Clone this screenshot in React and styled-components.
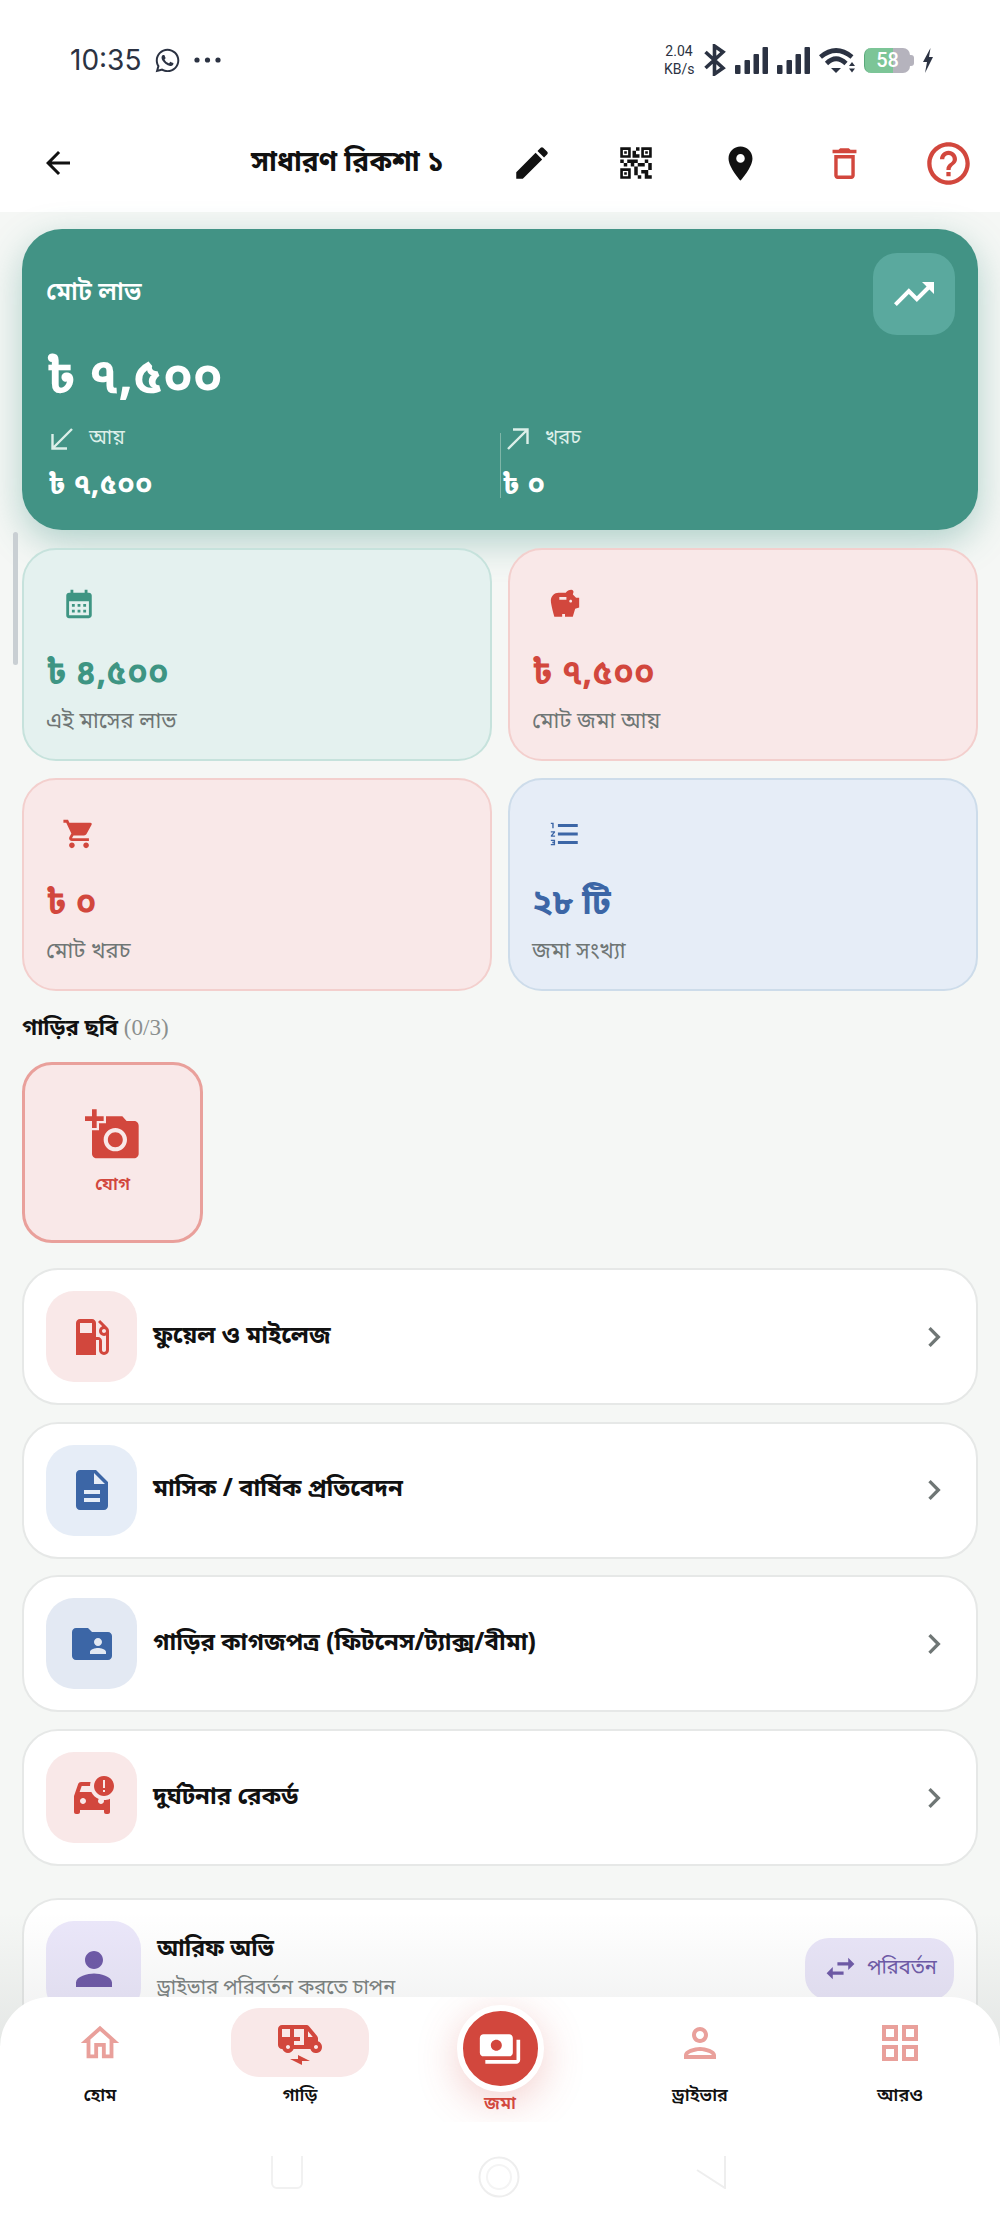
import React from "react";
import styled, { createGlobalStyle } from "styled-components";
import {
  MdArrowBack, MdEdit, MdQrCode2, MdPlace, MdDeleteOutline, MdHelpOutline, MdTrendingUp,
  MdCalendarMonth, MdSavings, MdShoppingCart, MdFormatListNumbered,
  MdAddAPhoto, MdLocalGasStation, MdDescription, MdFolderShared, MdCarCrash, MdChevronRight,
  MdPerson, MdSwapHoriz, MdOutlineHome, MdOutlinePerson, MdOutlineGridView, MdElectricRickshaw,
  MdPayments,
} from "react-icons/md";
import { FaWhatsapp } from "react-icons/fa";

const FONT = `"Noto Sans Bengali", "Noto Serif Bengali", "Lohit Bengali", "Liberation Sans", "Noto Sans", sans-serif`;

const Global = createGlobalStyle`
  html, body { margin: 0; padding: 0; background: #fff; }
  body { font-family: ${FONT}; color: #111; }
  * { box-sizing: border-box; }
  svg { display: block; }
`;

const Screen = styled.div`
  position: relative;
  width: 1000px;
  height: 2225px;
  overflow: hidden;
  background: #f5f7f5;
`;

const StatusBar = styled.div`
  height: 108px;
  background: #fff;
  display: flex;
  align-items: center;
  justify-content: space-between;
  padding: 12px 67px 0 70px;
  color: #2b3242;
`;

const Group = styled.div`
  display: flex;
  align-items: center;
  gap: ${(p) => p.$gap || 8}px;
`;

const Time = styled.span`
  font: 400 28px "Inter", sans-serif;
`;

const Speed = styled.span`
  font: 400 14px/18px "Roboto", sans-serif;
  text-align: center;
  width: 30px;
`;

const Battery = styled.span`
  position: relative;
  width: 46px;
  height: 25px;
  margin-right: 4px;
  border-radius: 7px;
  background: linear-gradient(90deg, #7cc597 62%, #b5b3bd 62%);
  border-left: 1px solid #5aa97b;
  color: #fff;
  font: 500 20px/25px "Roboto", sans-serif;
  text-align: center;
  &::after {
    content: "";
    position: absolute;
    right: -4px;
    top: 7px;
    width: 4px;
    height: 11px;
    border-radius: 0 3px 3px 0;
    background: #b5b3bd;
  }
`;

const Header = styled.header`
  height: 104px;
  background: #fff;
  display: flex;
  align-items: center;
  padding: 6px 0 0 40px;
`;

const Title = styled.h1`
  margin: 0;
  flex: 1;
  font-size: 28px;
  font-weight: 700;
  padding-left: 175px;
  white-space: nowrap;
`;

const HeaderIcons = styled.div`
  display: grid;
  grid-template-columns: repeat(5, 104px);
  justify-items: center;
  align-items: center;
`;

const Content = styled.main`
  padding: 17px 22px 0;
  display: flex;
  flex-direction: column;
`;

const ScrollThumb = styled.div`
  position: absolute;
  left: 13px;
  top: 532px;
  width: 5px;
  height: 133px;
  border-radius: 3px;
  background: #c9cfd3;
`;

const Hero = styled.section`
  height: 301px;
  border-radius: 40px;
  background: #429385;
  box-shadow: 0 12px 36px rgba(66, 147, 133, 0.38);
  color: #fff;
  padding: 24px 23px 0 24px;
  display: flex;
  flex-direction: column;
`;

const HeroTop = styled.div`
  display: flex;
  justify-content: space-between;
`;

const HeroLabel = styled.div`
  font-size: 25px;
  font-weight: 600;
  line-height: 36px;
  padding-top: 23px;
`;

const HeroBadge = styled.div`
  width: 82px;
  height: 82px;
  border-radius: 24px;
  background: #5aa99e;
  display: flex;
  align-items: center;
  justify-content: center;
`;

const HeroAmount = styled.div`
  font-size: 49px;
  font-weight: 700;
  line-height: 60px;
  margin-top: 16px;
`;

const HeroSplit = styled.div`
  display: grid;
  grid-template-columns: 454px 1fr;
  margin-top: 13px;
`;

const HeroCol = styled.div`
  padding-left: 2px;
  ${(p) => p.$divider && "background: linear-gradient(#7fb6a8, #7fb6a8) left 9px / 1px 65px no-repeat;"}
`;

const HeroColHead = styled.div`
  display: flex;
  align-items: center;
  gap: 16px;
  padding-left: ${(p) => p.$indent}px;
  font-size: 20px;
  line-height: 30px;
  color: #dcefe9;
`;

const HeroColValue = styled.div`
  font-size: 29px;
  font-weight: 700;
  line-height: 40px;
  margin-top: 13px;
`;

const StatGrid = styled.div`
  display: grid;
  grid-template-columns: 1fr 1fr;
  gap: 17px 16px;
  margin-top: 18px;
`;

const StatCard = styled.div`
  height: 213px;
  border-radius: 34px;
  border: 2px solid ${(p) => p.$line};
  background: ${(p) => p.$bg};
  padding: 37px 22px 0;
`;

const StatIcon = styled.div`
  height: 34px;
  padding-left: 16px;
  color: ${(p) => p.$color};
`;

const StatValue = styled.div`
  font-size: 34px;
  font-weight: 700;
  line-height: 44px;
  margin-top: 33px;
  color: ${(p) => p.$color};
`;

const StatLabel = styled.div`
  font-size: 22px;
  line-height: 30px;
  margin-top: 10px;
  color: #6f7675;
`;

const SectionHead = styled.div`
  font-size: 22px;
  font-weight: 700;
  line-height: 30px;
  margin-top: 24px;
`;

const Muted = styled.span`
  font: 400 23px "Liberation Serif", serif;
  color: #8a8f8e;
`;

const AddPhoto = styled.div`
  width: 181px;
  height: 181px;
  margin-top: 17px;
  border-radius: 30px;
  border: 3px solid #e9a09b;
  background: #f9e8e8;
  color: #d2473d;
  display: flex;
  flex-direction: column;
  align-items: center;
  padding-top: 42px;
  font-size: 18px;
  font-weight: 600;
  gap: 10px;
`;

const MenuList = styled.div`
  display: flex;
  flex-direction: column;
  gap: 16.7px;
  margin-top: 25px;
`;

const Row = styled.div`
  height: 137px;
  border-radius: 36px;
  border: 2px solid #e6e8e7;
  background: #fff;
  padding: 0 22px;
  display: flex;
  align-items: center;
  gap: 16px;
`;

const RowIcon = styled.div`
  width: ${(p) => p.$w || 91}px;
  height: ${(p) => p.$w || 91}px;
  border-radius: 28px;
  background: ${(p) => p.$bg};
  color: ${(p) => p.$color};
  display: flex;
  align-items: center;
  justify-content: center;
  flex: none;
`;

const RowText = styled.div`
  flex: 1;
  font-size: 24px;
  font-weight: 700;
`;

const RowChevron = styled(MdChevronRight)`
  color: #6f7675;
  flex: none;
`;

const DriverName = styled(RowText)`
  font-size: 23px;
`;

const RowSub = styled.div`
  font-size: 20px;
  font-weight: 400;
  color: #7d8382;
  margin-top: 11px;
`;

const SwapBtn = styled.div`
  width: 149px;
  height: 62px;
  flex: none;
  border-radius: 24px;
  background: #e9e5f8;
  color: #6f5aa8;
  font-size: 20px;
  display: flex;
  align-items: center;
  justify-content: center;
  gap: 8px;
`;

const DriverRow = styled(Row)`
  height: 141px;
  margin-top: 32px;
`;

const NavFade = styled.div`
  position: absolute;
  left: 0;
  right: 0;
  top: 1912px;
  height: 135px;
  background: linear-gradient(rgba(60, 70, 70, 0), rgba(60, 70, 70, 0.09));
`;

const BottomNav = styled.nav`
  position: absolute;
  left: 0;
  right: 0;
  bottom: 0;
  height: 228px;
  border-radius: 50px 50px 0 0;
  background: #fff;
`;

const NavGrid = styled.div`
  display: grid;
  grid-template-columns: repeat(5, 1fr);
  height: 125px;
`;

const NavItem = styled.div`
  display: flex;
  flex-direction: column;
  align-items: center;
  padding-top: 11px;
  font-size: 18px;
  font-weight: 600;
  color: #111;
`;

const NavIcon = styled.div`
  width: 138px;
  height: 69px;
  border-radius: 28px;
  background: ${(p) => (p.$active ? "#f9e8e8" : "transparent")};
  color: ${(p) => (p.$active ? "#d2473d" : "#e9a09b")};
  display: flex;
  align-items: center;
  justify-content: center;
  margin-bottom: 7px;
`;

const FabItem = styled(NavItem)`
  padding-top: 8px;
  overflow: hidden;
  color: #d2473d;
`;

const Fab = styled.div`
  width: 87px;
  height: 87px;
  flex: none;
  border-radius: 50%;
  border: 6px solid #fff;
  background: #d2473d;
  color: #fff;
  display: flex;
  align-items: center;
  justify-content: center;
  box-shadow: 0 10px 40px rgba(210, 71, 61, 0.26);
`;

const SystemKeys = styled.div`
  display: grid;
  grid-template-columns: repeat(3, 212px);
  justify-content: center;
  justify-items: center;
  margin-top: 34px;
  padding-right: 2px;
`;

const rows = [
  { t: "ফুয়েল ও মাইলেজ", I: MdLocalGasStation, bg: "#f9e8e8", c: "#d2473d" },
  { t: "মাসিক / বার্ষিক প্রতিবেদন", I: MdDescription, bg: "#e6edf7", c: "#3c66a6" },
  { t: "গাড়ির কাগজপত্র (ফিটনেস/ট্যাক্স/বীমা)", I: MdFolderShared, bg: "#e3e9f3", c: "#3c66a6" },
  { t: "দুর্ঘটনার রেকর্ড", I: MdCarCrash, bg: "#f9e8e8", c: "#d2473d" },
];

const Dots = () => (
  <svg width="27" height="6" viewBox="0 0 27 6" fill="currentColor">
    <circle cx="3" cy="3" r="2.6" />
    <circle cx="13.5" cy="3" r="2.6" />
    <circle cx="24" cy="3" r="2.6" />
  </svg>
);

const Bluetooth = () => (
  <svg width="23" height="32" viewBox="0 0 23 32" fill="none" stroke="currentColor" strokeWidth="3.6" strokeLinejoin="miter">
    <path d="M2.5 8 L20 24 L11.5 30 V2 L20 8 L2.5 24" />
  </svg>
);

const Signal = () => (
  <svg width="33" height="27" viewBox="0 0 33 27" fill="currentColor">
    <rect x="0" y="18" width="5.5" height="9" rx="1" />
    <rect x="9.5" y="13" width="5.5" height="14" rx="1" />
    <rect x="18.5" y="7" width="5.5" height="20" rx="1" />
    <rect x="27.5" y="0" width="5.5" height="27" rx="1" />
  </svg>
);

const Wifi = () => (
  <svg width="36" height="25" viewBox="0 0 36 25">
    <g fill="none" stroke="currentColor" strokeWidth="4.6">
      <path d="M1.5 9 Q17 -4 33 9" />
      <path d="M7.5 15.5 Q17 6 27 15.5" />
    </g>
    <g fill="currentColor">
      <polygon points="12,20 22,20 17,25" />
      <polygon points="30,18 36,18 33,14" />
      <polygon points="30,20.5 36,20.5 33,24.5" />
    </g>
  </svg>
);

const Bolt = () => (
  <svg width="10" height="25" viewBox="0 0 10 25" fill="currentColor">
    <polygon points="7.5,0 0,14 4,14 2,25 10,9 6,9" />
  </svg>
);

const ArrowIn = () => (
  <svg width="22" height="22" viewBox="0 0 22 22" fill="none" stroke="#dcefe9" strokeWidth="2.4">
    <path d="M21 1 L2 20 M1.5 6 V20.5 H16" />
  </svg>
);

const ArrowOut = () => (
  <svg width="22" height="22" viewBox="0 0 22 22" fill="none" stroke="#dcefe9" strokeWidth="2.4">
    <path d="M1 21 L20 2 M6 1.5 H20.5 V16" />
  </svg>
);

const KeySquare = () => (
  <svg width="32" height="33" viewBox="0 0 32 33" fill="none" stroke="#f1f1f1" strokeWidth="2">
    <rect x="1" y="-6" width="30" height="38" rx="5" />
  </svg>
);

const KeyCircle = () => (
  <svg width="42" height="42" viewBox="0 0 42 42" fill="none" stroke="#eeeeee" strokeWidth="2">
    <circle cx="21" cy="21" r="19.5" />
    <circle cx="21" cy="21" r="12" stroke="#f4f4f4" />
  </svg>
);

const KeyTriangle = () => (
  <svg width="30" height="33" viewBox="0 0 30 33" fill="none" stroke="#eeeeee" strokeWidth="2">
    <path d="M1 14 L29 32 V0" />
  </svg>
);

const App = () => (
  <Screen>
    <Global />
    <StatusBar>
      <Group $gap={13}>
        <Time>10:35</Time>
        <FaWhatsapp size={27} />
        <Dots />
      </Group>
      <Group $gap={9}>
        <Speed>2.04<br />KB/s</Speed>
        <Bluetooth />
        <Signal />
        <Signal />
        <Wifi />
        <Battery>58</Battery>
        <Bolt />
      </Group>
    </StatusBar>
    <Header>
      <MdArrowBack size={36} />
      <Title>সাধারণ রিকশা ১</Title>
      <HeaderIcons>
        <MdEdit size={42} />
        <MdQrCode2 size={42} />
        <MdPlace size={41} />
        <MdDeleteOutline size={41} color="#d2473d" />
        <MdHelpOutline size={51} color="#d2473d" />
      </HeaderIcons>
    </Header>
    <Content>
      <Hero>
        <HeroTop>
          <HeroLabel>মোট লাভ</HeroLabel>
          <HeroBadge><MdTrendingUp size={48} /></HeroBadge>
        </HeroTop>
        <HeroAmount>৳ ৭,৫০০</HeroAmount>
        <HeroSplit>
          <HeroCol>
            <HeroColHead $indent={3}><ArrowIn />আয়</HeroColHead>
            <HeroColValue>৳ ৭,৫০০</HeroColValue>
          </HeroCol>
          <HeroCol $divider>
            <HeroColHead $indent={5}><ArrowOut />খরচ</HeroColHead>
            <HeroColValue>৳ ০</HeroColValue>
          </HeroCol>
        </HeroSplit>
      </Hero>
      <StatGrid>
        <StatCard $bg="#e4f1ef" $line="#c6e2dc">
          <StatIcon $color="#3e9583"><MdCalendarMonth size={34} /></StatIcon>
          <StatValue $color="#3e9583">৳ ৪,৫০০</StatValue>
          <StatLabel>এই মাসের লাভ</StatLabel>
        </StatCard>
        <StatCard $bg="#f9e8e8" $line="#f3cfcd">
          <StatIcon $color="#d2473d"><MdSavings size={34} /></StatIcon>
          <StatValue $color="#d2473d">৳ ৭,৫০০</StatValue>
          <StatLabel>মোট জমা আয়</StatLabel>
        </StatCard>
        <StatCard $bg="#f9e8e8" $line="#f3cfcd">
          <StatIcon $color="#d2473d"><MdShoppingCart size={34} /></StatIcon>
          <StatValue $color="#d2473d">৳ ০</StatValue>
          <StatLabel>মোট খরচ</StatLabel>
        </StatCard>
        <StatCard $bg="#e6edf7" $line="#cddcea">
          <StatIcon $color="#3c66a6"><MdFormatListNumbered size={34} /></StatIcon>
          <StatValue $color="#3c66a6">২৮ টি</StatValue>
          <StatLabel>জমা সংখ্যা</StatLabel>
        </StatCard>
      </StatGrid>
      <SectionHead>গাড়ির ছবি <Muted>(0/3)</Muted></SectionHead>
      <AddPhoto>
        <MdAddAPhoto size={56} />
        যোগ
      </AddPhoto>
      <MenuList>
        {rows.map(({ t, I, bg, c }) => (
          <Row key={t}>
            <RowIcon $bg={bg} $color={c}><I size={48} /></RowIcon>
            <RowText>{t}</RowText>
            <RowChevron size={40} />
          </Row>
        ))}
      </MenuList>
      <DriverRow>
        <RowIcon $w={95} $bg="#ebe7fa" $color="#6f5aa8"><MdPerson size={54} /></RowIcon>
        <DriverName>
          আরিফ অভি
          <RowSub>ড্রাইভার পরিবর্তন করতে চাপন</RowSub>
        </DriverName>
        <SwapBtn><MdSwapHoriz size={37} />পরিবর্তন</SwapBtn>
      </DriverRow>
    </Content>
    <ScrollThumb />
    <NavFade />
    <BottomNav>
      <NavGrid>
        <NavItem><NavIcon><MdOutlineHome size={46} /></NavIcon>হোম</NavItem>
        <NavItem><NavIcon $active><MdElectricRickshaw size={48} /></NavIcon>গাড়ি</NavItem>
        <FabItem><Fab><MdPayments size={44} /></Fab>জমা</FabItem>
        <NavItem><NavIcon><MdOutlinePerson size={48} /></NavIcon>ড্রাইভার</NavItem>
        <NavItem><NavIcon><MdOutlineGridView size={48} /></NavIcon>আরও</NavItem>
      </NavGrid>
      <SystemKeys>
        <KeySquare />
        <KeyCircle />
        <KeyTriangle />
      </SystemKeys>
    </BottomNav>
  </Screen>
);

export default App;
